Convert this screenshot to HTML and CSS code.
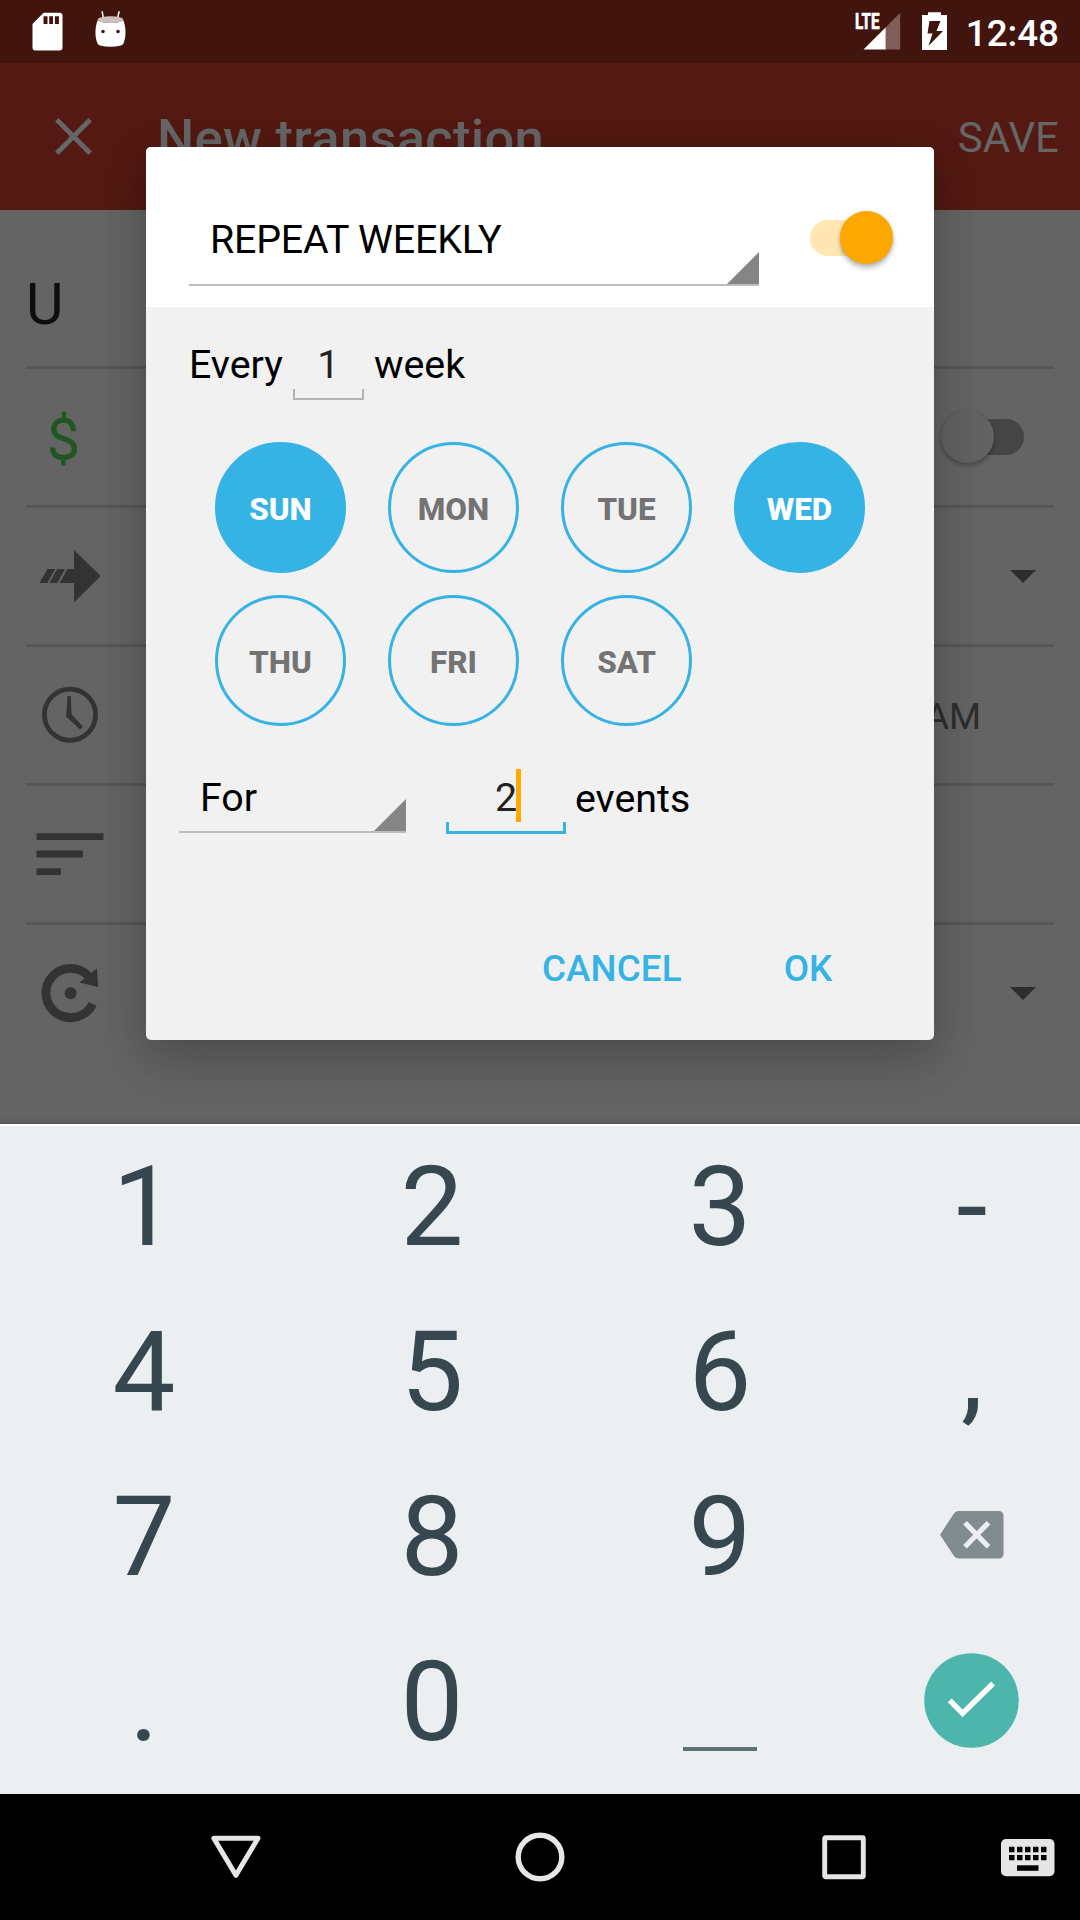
FILE: index.html
```html
<!DOCTYPE html>
<html lang="en">
<head>
<meta charset="utf-8">
<title>New transaction</title>
<link rel="stylesheet" href="styles.css">
</head>
<body>
<div class="screen">
  <header class="status">
    <svg class="status-left" width="96" height="45" viewBox="32 8 96 45">
      <path fill="#fff" fill-rule="evenodd" d="M43.6 12.7H59.5a3 3 0 0 1 3 3V47.500a3 3 0 0 1-3 3H35.500a3 3 0 0 1-3-3V24ZM43.500 16.300V24h4V16.300ZM49.200 16.300V24h3.800V16.300ZM54.900 16.300V24h4V16.300Z"/>
      <path stroke="#fff" stroke-width="1.500" stroke-linecap="round" fill="none" d="M102.200 11.800 103.500 19M119 11.800 117.500 19"/>
      <path fill="#fff" fill-rule="evenodd" d="M97.500 20.500Q110.500 25.500 123.500 20.500C126.200 28 126.200 37 123.500 43.500Q122.700 45 121 45.500Q110.500 48 100 45.500Q98.300 45 97.500 43.500C94.800 37 94.800 28 97.500 20.500ZM101.200 31.500a1.800 1.800 0 1 0 3.600 0a1.800 1.800 0 1 0-3.600 0ZM116.200 31.500a1.800 1.800 0 1 0 3.600 0a1.800 1.800 0 1 0-3.600 0Z"/>
      <ellipse cx="110.500" cy="19.700" rx="12.800" ry="3.400" fill="#cdbfbd"/>
    </svg>
    <svg class="status-right" width="96" height="45" viewBox="853 8 96 45">
      <text class="lte" x="855" y="29.300" textLength="24.500" lengthAdjust="spacingAndGlyphs">LTE</text>
      <path fill="#fff" d="M863.500 49.500 885.800 27.200V49.500Z"/>
      <path fill="#7f5d59" d="M885.800 27.200 900.200 12.800V49.500H885.800Z"/>
      <path fill="#fff" fill-rule="evenodd" d="M928 12.200h13v2.900h6V50h-25V15.100h6ZM929.500 21 927.500 33.500H932.500L928.500 46 943 31H936.500L940.500 21Z"/>
    </svg>
    <span class="clock">12:48</span>
  </header>
  <div class="appbar">
    <svg class="close" width="37" height="37" viewBox="0 0 37 37"><path d="M1.800 1.800 35.200 35.200M35.200 1.800 1.800 35.200" stroke="#666" stroke-width="4.800"/></svg>
    <h1>New transaction</h1>
    <span class="save">SAVE</span>
  </div>
  <main class="form">
    <div class="row row-title"><span class="title-text">U</span></div>
    <div class="row">
      <svg class="icon" width="72" height="72" viewBox="34 401.500 72 72"><path fill="none" stroke="#1f5622" stroke-width="5.300" d="M73.400 431.700C73.400 424.500 69.500 420.600 63.800 420.600C57.800 420.600 53.900 424.300 53.900 429.500C53.900 442.500 74.400 436.500 74.400 449.200C74.400 454.800 70 458.100 63.500 458.100C56.500 458.100 52.600 454.500 52.600 448"/><path fill="#1f5622" d="M62 412H66V419.500H62ZM61 459.500H65.500V466H61Z"/></svg>
      <div class="switch off"><i></i></div>
    </div>
    <div class="row">
      <svg class="icon" width="72" height="72" viewBox="34 540 72 72"><path fill="#333" d="M47.500 569H55.300L47.300 583H39.300ZM57.200 569H65L57.300 583H49.300ZM67.500 569H74V550L100.700 576 74 602.500V583H59.500Z"/></svg>
      <svg class="caret" width="26" height="13" viewBox="0 0 26 13"><path fill="#2d2d2d" d="M0 0H26L13 13Z"/></svg>
    </div>
    <div class="row">
      <svg class="icon" width="72" height="72" viewBox="34 679 72 72"><circle cx="70" cy="714.700" r="25.600" fill="none" stroke="#333" stroke-width="4.800"/><path fill="#333" d="M67.400 696H70.800L71.600 714.200 83 726.500 80.200 729.800 66.200 716.500Z"/></svg>
      <span class="time">12:48 AM</span>
    </div>
    <div class="row">
      <svg class="icon" width="72" height="72" viewBox="34 818 72 72"><path fill="#333" d="M36.500 833.200H103.500V840H36.500ZM36.500 850.600H83V857.500H36.500ZM36.500 868.200H61V875H36.500Z"/></svg>
    </div>
    <div class="row row-last">
      <svg class="icon" width="72" height="72" viewBox="34 957 72 72"><path fill="none" stroke="#333" stroke-width="8.800" d="M92.700 1003.800A24.600 24.600 0 1 1 88.500 976.200"/><path fill="#333" d="M96.800 968.500 98.200 987 79.500 982.500Z"/><circle cx="70.600" cy="993.300" r="6" fill="#333"/></svg>
      <svg class="caret" width="26" height="13" viewBox="0 0 26 13"><path fill="#2d2d2d" d="M0 0H26L13 13Z"/></svg>
    </div>
  </main>
  <section class="keyboard">
    <span>1</span><span>2</span><span>3</span><span>-</span>
    <span>4</span><span>5</span><span>6</span><span>,</span>
    <span>7</span><span>8</span><span>9</span>
    <span><svg width="64" height="48" viewBox="0 0 64 48"><path fill="#808c90" d="M18.500 0H59a4.500 4.500 0 0 1 4.500 4.500V43a4.500 4.500 0 0 1-4.500 4.500H18.500Q16 47.500 14.300 45.500L0 23.700 14.300 2Q16 0 18.500 0Z"/><path d="M25 11.800 48.500 35.700M48.500 11.800 25 35.700" stroke="#ebeff2" stroke-width="5.200"/></svg></span>
    <span>.</span><span>0</span><span><i class="space-mark"></i></span>
    <span><svg class="done" width="95" height="95" viewBox="0 0 95 95"><circle cx="47.500" cy="47.500" r="47.300" fill="#4db6ac"/><path d="M25.700 47.300 38.600 60.400 69 30.500" fill="none" stroke="#fff" stroke-width="5.400"/></svg></span>
  </section>
  <nav class="nav">
    <svg width="50" height="50" viewBox="211 1832 50 50"><path d="M213.800 1838.300H258L235.900 1875.300Z" fill="none" stroke="#e6e6e6" stroke-width="5" stroke-linejoin="round"/></svg>
    <svg width="50" height="50" viewBox="0 0 50 50"><circle cx="25" cy="25" r="21.800" fill="none" stroke="#e6e6e6" stroke-width="5.400"/></svg>
    <svg width="50" height="50" viewBox="0 0 50 50"><rect x="5.700" y="5.700" width="38.600" height="39" rx="1" fill="none" stroke="#e6e6e6" stroke-width="4.900"/></svg>
    <svg class="ime" width="54" height="38" viewBox="1001 1839 54 38"><path fill="#e6e6e6" fill-rule="evenodd" d="M1006 1839h43.500a5 5 0 0 1 5 5v27.200a5 5 0 0 1-5 5H1006a5 5 0 0 1-5-5V1844a5 5 0 0 1 5-5Z"/><path d="M1009 1849.500h38M1009 1857.700h38" stroke="#000" stroke-width="5.300" stroke-dasharray="5.500 2.500"/><path d="M1017 1865.300h21.500v5.500H1017Z"/></svg>
  </nav>

  <div class="dialog">
    <div class="dialog-head">
      <div class="spinner freq">REPEAT WEEKLY</div>
      <div class="switch on"><i></i></div>
    </div>
    <div class="every">
      <span>Every</span><span class="field">1</span><span>week</span>
    </div>
    <div class="days">
      <span class="day picked">SUN</span><span class="day">MON</span><span class="day">TUE</span><span class="day picked">WED</span>
      <span class="day">THU</span><span class="day">FRI</span><span class="day">SAT</span>
    </div>
    <div class="ends">
      <div class="spinner end">For</div>
      <span class="field active">2<i class="cursor"></i></span>
      <span class="unit">events</span>
    </div>
    <div class="actions"><span>CANCEL</span><span>OK</span></div>
  </div>
</div>
</body>
</html>
```
FILE: styles.css
```css
*, *::before, *::after { box-sizing: border-box; }
body { margin: 0; font-family: Roboto, sans-serif; }
svg { display: block; flex: none; }
.screen {
  position: relative;
  display: flex;
  flex-direction: column;
  width: 1080px;
  height: 1920px;
  overflow: hidden;
  background: #646464;
}

/* status bar */
.status {
  display: flex;
  align-items: flex-start;
  height: 63px;
  padding: 8px 21px 0 32px;
  background: #41140e;
  color: #fff;
}
.status-right { margin-left: auto; }
.lte { font: 700 22.500px Roboto, sans-serif; fill: #fff; stroke: #fff; stroke-width: .7px; }
.clock {
  width: 94px;
  margin-left: 16px;
  font-size: 36.750px;
  font-weight: 500;
  line-height: 52px;
  text-align: right;
}

/* app bar */
.appbar {
  display: flex;
  align-items: center;
  height: 147px;
  padding: 0 21px 0 55px;
  background: #531912;
  color: #666;
}
.close { margin-right: 65px; }
h1 { margin: 2px 0 0; font-size: 52.500px; font-weight: 500; line-height: 60px; letter-spacing: .3px; }
.save { margin-left: auto; padding-top: 2px; font-size: 42px; }

/* form behind the dialog */
.form { height: 914px; padding: 0 26px; }
.row {
  display: flex;
  align-items: center;
  height: 139px;
  padding: 0 18px 0 8px;
  border-bottom: 3px solid #575757;
}
.row-title { height: 159px; padding: 32px 0 0; }
.row-last { border-bottom-color: transparent; }
.title-text { font-size: 57.750px; line-height: 70px; color: #0e0e0e; }
.caret { margin-left: auto; }
.time { margin-left: auto; margin-right: 55px; padding-top: 2px; font-size: 36.750px; color: #2d2d2d; }

.switch { position: relative; flex: none; width: 83px; height: 53px; }
.switch::before {
  content: "";
  position: absolute;
  top: 9px;
  width: 70px;
  height: 36px;
  border-radius: 18px;
}
.switch i {
  position: absolute;
  top: 0;
  width: 53px;
  height: 53px;
  border-radius: 50%;
}
.on::before { left: 0; background: #ffe6b3; }
.on i { right: 0; background: #fca800; box-shadow: 0 4px 5px rgba(0,0,0,.26), 0 0 3px rgba(0,0,0,.14); }
.off { margin: 0 12px 2px auto; }
.off::before { right: 0; background: #454545; }
.off i { left: 0; background: #626262; box-shadow: 0 3px 4px rgba(0,0,0,.24), 0 0 3px rgba(0,0,0,.12); }

/* numeric keyboard */
.keyboard {
  position: relative;
  z-index: 2;
  display: grid;
  grid-template-columns: 288px 288px 288px 216px;
  grid-template-rows: repeat(4, 165px);
  height: 670px;
  padding-top: 1px;
  border-top: 2px solid #fff;
  background: #ebeff2;
  color: #37474f;
  font-size: 112px;
  line-height: 160px;
  box-shadow: 0 -1px 6px rgba(0,0,0,.2);
}
.keyboard span { display: flex; justify-content: center; }
.keyboard svg { margin-top: 54px; }
.keyboard .done { margin: 31px 1px 0 0; }
.space-mark { width: 74px; height: 4px; margin-top: 125px; background: #5f7073; }

.nav { display: flex; align-items: center; height: 126px; padding: 0 25px 0 211px; background: #000; }
.nav svg { margin-right: 254px; }
.nav svg:nth-child(3) { margin-right: 132px; }
.nav .ime { margin: 1px 0 0; }

/* recurrence dialog */
.dialog {
  position: absolute;
  z-index: 1;
  left: 146px;
  top: 147px;
  width: 788px;
  height: 893px;
  border-radius: 5px;
  background: #f1f1f1;
  color: #000;
  font-size: 39.375px;
  line-height: 53px;
  box-shadow: 0 22px 52px rgba(0,0,0,.19), 0 4px 44px rgba(0,0,0,.1);
}
.dialog-head {
  display: flex;
  justify-content: space-between;
  height: 160px;
  padding: 0 41px 0 43px;
  border-radius: 5px 5px 0 0;
  background: #fff;
}
.dialog-head .switch { margin-top: 64px; }
.spinner { position: relative; border-bottom: 2px solid #bdbdbd; }
.spinner::after {
  content: "";
  position: absolute;
  right: 0;
  bottom: 0;
  width: 32px;
  height: 32px;
  background: #858585;
  clip-path: polygon(100% 0, 100% 100%, 0 100%);
}
.freq { width: 570px; height: 139px; padding: 66px 0 0 21px; letter-spacing: -.2px; }
.every { display: flex; height: 62px; margin: 31px 0 42px; padding-left: 43px; }
.field {
  position: relative;
  width: 71px;
  height: 62px;
  margin: 0 10px;
  color: #212121;
  text-align: center;
}
.field::after {
  content: "";
  position: absolute;
  left: 0;
  right: 0;
  bottom: 0;
  height: 11px;
  border: 2px solid #b4b4b4;
  border-top: 0;
}
.days {
  display: grid;
  grid-template-columns: repeat(4, 131px);
  gap: 22px 42px;
  margin-left: 69px;
}
.day {
  height: 131px;
  border: 3px solid #36b3e5;
  border-radius: 50%;
  color: #737373;
  font-size: 31.500px;
  font-weight: 800;
  line-height: 129px;
  text-align: center;
}
.picked { background: #36b3e5; color: #fff; }
.ends { display: flex; height: 65px; margin-top: 44px; padding-left: 33px; }
.end { width: 227px; height: 63px; padding: 1px 0 0 21px; }
.ends > span { line-height: 55px; }
.ends > .unit { line-height: 57px; }
.active { width: 120px; height: 64px; margin: 0 9px 0 40px; }
.active::after { height: 12px; border: 3px solid #36b3e5; border-top: 0; }
.cursor { position: absolute; left: 70px; top: -1px; width: 5px; height: 53px; background: #fa0; }
.actions {
  display: flex;
  gap: 102px;
  margin: 107px 0 0 396px;
  color: #36b3e5;
  font-size: 36.750px;
  font-weight: 500;
  letter-spacing: .1px;
}
```
